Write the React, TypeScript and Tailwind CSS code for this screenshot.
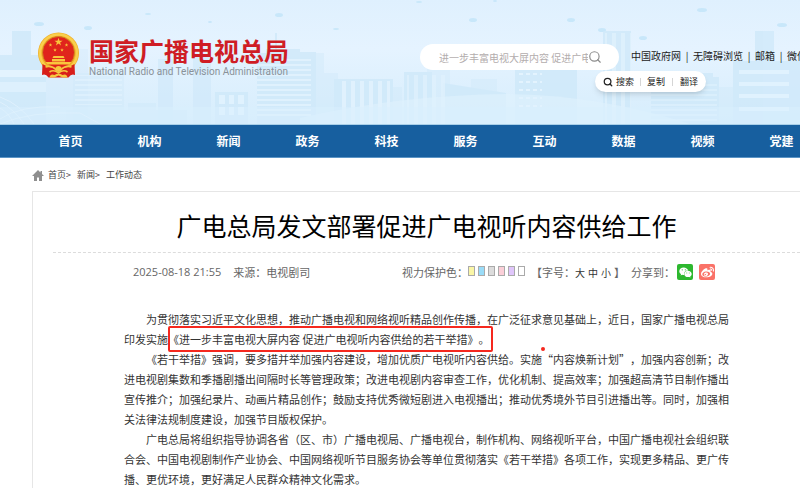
import { Search } from "lucide-react";
import { FaWeibo, FaWeixin } from "react-icons/fa";

const NAV = ["首页", "机构", "新闻", "政务", "科技", "服务", "互动", "数据", "视频", "党建"];

const TOP_LINKS = ["中国政府网", "无障碍浏览", "邮箱", "微信"];

const CRUMBS = ["首页", "新闻"];

const EYE_COLORS = [
  { name: "黄色", className: "bg-[#faf6a6]" },
  { name: "蓝色", className: "bg-[#9adcf8]" },
  { name: "灰色", className: "bg-[#dcdcdc]" },
  { name: "粉色", className: "bg-[#fbcfd8]" },
  { name: "紫色", className: "bg-[#e0c6fb]" },
  { name: "白色", className: "bg-white" },
];

export default function App() {
  return (
    <div
      lang="zh-CN"
      className="flex min-h-screen flex-col overflow-hidden bg-white font-['Noto_Sans_CJK_SC',sans-serif] text-[#333]"
    >
      <Header />
      <Nav />
      <Breadcrumb />
      <Article />
    </div>
  );
}

function Header() {
  return (
    <header className="relative h-[125px] overflow-hidden border-b border-[#a9cfe8] bg-[#e3f2fe]">
      <Skyline />

      <div className="relative flex h-full items-start pl-[37px] whitespace-nowrap">
        <a href="#home" className="mt-8 flex shrink-0 items-start gap-[9px]">
          <Emblem />
          <span className="flex flex-col">
            <span className="mt-1 text-[25px] leading-7 font-bold text-[#cf1d25]">国家广播电视总局</span>
            <span className="font-['Roboto',sans-serif] text-[10px] leading-4 text-[#8a9299]">
              National Radio and Television Administration
            </span>
          </span>
        </a>

        <form className="mt-11 ml-auto flex h-[26px] w-[199px] shrink-0 items-center rounded-full bg-white pr-[17px] pl-[19px]">
          <input
            type="text"
            aria-label="站内搜索"
            placeholder="进一步丰富电视大屏内容 促进广电视听"
            className="w-[150px] min-w-0 text-[10px] text-[#333] outline-none placeholder:text-[#b3adad]"
          />
          <button type="button" aria-label="搜索">
            <Search className="size-[14px] text-[#8c8c8c]" strokeWidth={2} />
          </button>
        </form>

        <div className="relative mt-12 ml-3 w-[169px] shrink-0">
          <nav className="flex text-[10px] leading-4 text-[#222]">
            {TOP_LINKS.map((label, i) => (
              <span key={label} className="flex">
                {i > 0 && <span className="w-3 text-center">|</span>}
                <a href="#top">{label}</a>
              </span>
            ))}
          </nav>

          {/* Menú flotante de selección */}
          <div className="absolute top-[23px] -left-9 flex h-[21px] items-center rounded-full bg-white px-2 text-[9px] text-[#222] shadow-md">
            <button type="button" className="flex items-center gap-[3px]">
              <Search className="size-[10px]" strokeWidth={3} />
              搜索
            </button>
            <span className="mx-[6px] h-2 w-px shrink-0 bg-[#d5d5d5]" />
            <button type="button">复制</button>
            <span className="mx-[7px] h-2 w-px shrink-0 bg-[#d5d5d5]" />
            <button type="button">翻译</button>
          </div>
        </div>
      </div>
    </header>
  );
}

function Nav() {
  return (
    <nav className="flex h-[33px] items-center border-b border-[#5c95c6] bg-[#175f9f] pl-[31px] text-[12px] font-bold text-white">
      {NAV.map((label) => (
        <a key={label} href="#nav" className="w-[79px] shrink-0 text-center">
          {label}
        </a>
      ))}
    </nav>
  );
}

function Breadcrumb() {
  return (
    <nav aria-label="面包屑" className="flex h-[33px] items-center pl-8 text-[9px] text-[#444]">
      <svg viewBox="0 0 12 12" className="mr-1 h-3 w-3 text-[#8f8f8f]" aria-hidden="true">
        <path d="M6 1 0 7h2v5h3V8.500h2V12h3V7h2L10 5V2H8.500v1.500z" fill="currentColor" />
      </svg>
      {CRUMBS.map((label) => (
        <span key={label} className="mr-[6px]">
          <a href="#crumb">{label}</a>&gt;
        </span>
      ))}
      <a href="#crumb">工作动态</a>
    </nav>
  );
}

function Article() {
  return (
    <main className="ml-8 flex-1 border-t border-l border-[#e6e6e6] pl-5">
      <h1 className="pt-[15px] pb-2 text-center text-[25px] leading-[37px] text-black">
        广电总局发文部署促进广电视听内容供给工作
      </h1>
      <div className="border-t border-dashed border-[#dcdcdc]" />

      <div className="mx-auto max-w-[605px]">
        <div className="mt-2 flex h-[22px] items-center pr-[14px] pl-[9px] text-[11px] whitespace-nowrap text-[#666]">
          <time className="font-['Open_Sans',sans-serif]">2025-08-18 21:55</time>
          <span className="ml-3">来源：电视剧司</span>

          <span className="ml-auto">视力保护色：</span>
          <span className="flex gap-[3px] pb-[2px]">
            {EYE_COLORS.map((c) => (
              <button
                key={c.name}
                type="button"
                aria-label={c.name}
                className={`h-[10px] w-[7px] border border-[#aaa] ${c.className}`}
              />
            ))}
          </span>
          <span className="ml-[6px]">【字号：</span>
          <span className="flex gap-[3px] text-[10px] text-[#333]">
            <button type="button">大</button>
            <button type="button">中</button>
            <button type="button">小</button>
          </span>
          <span className="ml-[3px]">】</span>
          <span className="ml-[6px]">分享到：</span>
          <button
            type="button"
            aria-label="微信"
            className="ml-[2px] flex size-4 items-center justify-center rounded-xs bg-[#2db82f] text-white"
          >
            <FaWeixin className="size-[13px]" />
          </button>
          <button
            type="button"
            aria-label="微博"
            className="ml-[6px] flex size-4 items-center justify-center rounded-xs bg-[#fa7268] text-white"
          >
            <FaWeibo className="size-[13px]" />
          </button>
        </div>

        <div className="relative mt-[26px] indent-[2em] text-[11px] leading-5 text-[#333] [text-spacing-trim:space-all]">
          <p>
            为贯彻落实习近平文化思想，推动广播电视和网络视听精品创作传播，在广泛征求意见基础上，近日，国家广播电视总局印发实施
            <span className="relative inline-block indent-0">
              《进一步丰富电视大屏内容 促进广电视听内容供给的若干举措》。
              <span className="absolute -inset-y-[3px] -right-1 left-0 rounded-xs border-2 border-[#f5281e]" />
            </span>
          </p>
          <p>
            《若干举措》强调，要多措并举加强内容建设，增加优质广电视听内容供给。实施“内容焕新计划”，加强内容创新；改进电视剧集数和季播剧播出间隔时长等管理政策；改进电视剧内容审查工作，优化机制、提高效率；加强超高清节目制作播出宣传推介；加强纪录片、动画片精品创作；鼓励支持优秀微短剧进入电视播出；推动优秀境外节目引进播出等。同时，加强相关法律法规制度建设，加强节目版权保护。
          </p>
          <p>
            广电总局将组织指导协调各省（区、市）广播电视局、广播电视台，制作机构、网络视听平台，中国广播电视社会组织联合会、中国电视剧制作产业协会、中国网络视听节目服务协会等单位贯彻落实《若干举措》各项工作，实现更多精品、更广传播、更优环境，更好满足人民群众精神文化需求。
          </p>
          <span className="absolute top-[38px] left-[417px] size-1 rounded-full bg-[#f5281e]" />
        </div>
      </div>
    </main>
  );
}

function Emblem() {
  const star = "M0-5 1.2-1.6 4.8-1.6 1.9.6 3 4 0 1.9-3 4-1.9.6-4.8-1.6-1.2-1.6z";
  return (
    <svg viewBox="0 0 42 46" className="h-[46px] w-[43px]" aria-hidden="true">
      <circle cx="21" cy="21" r="20.500" fill="#f1b02a" />
      <circle cx="21" cy="21" r="18.500" fill="none" stroke="#f9cf4c" strokeWidth="2.500" />
      <circle cx="21" cy="20.500" r="16" fill="#e0241c" stroke="#cf8a1e" strokeWidth=".8" />
      <g fill="#f9c63c">
        <path d={star} transform="translate(21 10) scale(.85)" />
        <path d={star} transform="translate(13 13) scale(.38)" />
        <path d={star} transform="translate(29 13) scale(.38)" />
        <path d={star} transform="translate(17.500 18) scale(.38)" />
        <path d={star} transform="translate(24.500 18) scale(.38)" />
        <path d="M16 24h10l1 2H15zM14.500 27h13v2.500h-13zM8 30h26L32 32.500H10z" />
      </g>
      <path d="M5 32Q11 36 21 36Q31 36 37 32L37.500 43Q34 41 31 45.500H11Q8 41 4.500 43z" fill="#d81e1a" />
      <path
        d="M8 35Q14 33 19 38M34 35Q28 33 23 38M12 40Q16 37 21 41Q26 37 30 40"
        fill="none"
        stroke="#f6c63f"
        strokeWidth="1.600"
      />
      <path d="M12 45.500Q13 41 17 43Q21 40 25 43Q29 41 30 45.500H25L21 43.500 17 45.500z" fill="#f6c63f" />
      <circle cx="21" cy="37" r="3" fill="#f6c63f" />
    </svg>
  );
}

function Skyline() {
  return (
    <svg
      viewBox="0 0 800 125"
      preserveAspectRatio="xMidYMax slice"
      className="absolute inset-0 size-full"
      aria-hidden="true"
    >
      <defs>
        <linearGradient id="sky" x1="0" y1="0" x2="0" y2="1">
          <stop offset="0" stopColor="#dff0fe" />
          <stop offset="0.4" stopColor="#e5f3ff" />
          <stop offset="1" stopColor="#d6edfc" />
        </linearGradient>
        <pattern id="floors" width="8" height="5" patternUnits="userSpaceOnUse">
          <rect width="8" height="2" fill="#e3f3fe" />
        </pattern>
        <pattern id="columns" width="9" height="8" patternUnits="userSpaceOnUse">
          <rect width="4" height="8" fill="#e0f1fd" />
        </pattern>
        <pattern id="windows" width="7" height="8" patternUnits="userSpaceOnUse">
          <rect x="1" y="2" width="4" height="2" fill="#e3f3fe" />
        </pattern>
      </defs>
      <rect width="800" height="125" fill="url(#sky)" />

      <g fill="#c8e7fa">
        <ellipse cx="39" cy="25" rx="5" ry="2" />
        <ellipse cx="88" cy="29" rx="4" ry="2" />
        <ellipse cx="148" cy="15" rx="3" ry="1" />
        <ellipse cx="210" cy="23" rx="2" ry="1" />
        <ellipse cx="279" cy="16" rx="4" ry="2" />
        <ellipse cx="336" cy="30" rx="3" ry="1" />
        <ellipse cx="419" cy="3" rx="3" ry="1" />
        <ellipse cx="473" cy="21" rx="4" ry="2" />
        <ellipse cx="495" cy="2" rx="2" ry="1" />
        <ellipse cx="571" cy="21" rx="4" ry="2" />
        <ellipse cx="602" cy="31" rx="4" ry="2" />
        <ellipse cx="643" cy="39" rx="4" ry="2" />
        <ellipse cx="702" cy="11" rx="5" ry="2" />
        <ellipse cx="782" cy="26" rx="5" ry="2" />
      </g>

      <g fill="#cfe9fa" opacity="0.8">
        <path d="M12 32H31V56H46V125H0V56H12z" />
        <path d="M38 62H74V50H88V125H38z" opacity="0.4" />
        <path d="M73 74H124V125H73z" opacity="0.5" />
        <path d="M158 60H173V125H158zM193 58H211V125H193z" opacity="0.8" />
        <path d="M128 104H156V125H128zM66 111H187V125H66z" opacity="0.6" />
        <path d="M215 93H248V125H215z" />
        <path d="M257 54H266V50H275V34H277V50H300V53H316V125H257z" />
        <path d="M316 54H324V74H338V125H316z" opacity="0.5" />
        <path d="M334 80H393V125H334z" />
        <path d="M393 88H402V125H393z" opacity="0.5" />
        <path d="M404 73H432V125H404z" />
        <path d="M427 69H450V125H427z" opacity="0.5" />
        <path d="M443 84 506 94V125H443z" />
        <path d="M471 80H497V94H471z" opacity="0.5" />
        <path d="M515 68H577V125H515z" />
        <path d="M603 32H631V125H603z" />
        <path d="M651 82H660V74H713V78H719V125H651z" />
        <path d="M733 62H755V32H774V62H800V125H733z" />
        <path d="M719 88H733V125H719z" opacity="0.5" />
      </g>

      <rect y="71" width="52" height="7" fill="#e3f3fe" />
      <rect y="83" width="46" height="10" fill="#ddf0fd" />
      <rect x="75" y="76" width="47" height="30" fill="url(#floors)" opacity="0.6" />
      <rect x="257" y="58" width="54" height="60" fill="url(#floors)" opacity="0.8" />
      <rect x="338" y="82" width="52" height="43" fill="url(#columns)" />
      <rect x="407" y="76" width="40" height="49" fill="url(#columns)" opacity="0.7" />
      <rect x="516" y="69" width="26" height="40" fill="url(#windows)" />
      <rect x="605" y="34" width="26" height="91" fill="url(#columns)" opacity="0.8" />
      <rect x="651" y="84" width="66" height="41" fill="url(#floors)" opacity="0.5" />
      <path
        d="M739 71H789V75H739zM739 83H789V87H739zM739 95H789V99H739zM739 108H789V112H739z"
        fill="#e0f2fe"
      />
      <path d="M219 96h6v9h-6zM229 96h5v9h-5zM238 96h6v9h-6zM219 108h6v8h-6zM229 108h5v8h-5zM238 108h6v8h-6z" fill="#e0f2fe" />

      <path d="M300 119Q400 96 506 95Q600 96 690 125H300z" fill="#e0f2fe" opacity="0.6" />
      <path
        d="M0 98Q20 105 34 125M0 103Q14 110 24 125M0 109Q9 114 14 125M0 120Q20 106 60 108M0 125Q30 112 80 114L100 125"
        fill="none"
        stroke="#eef8ff"
        strokeWidth="1"
        opacity="0.5"
      />
      <rect y="108" width="800" height="17" fill="#d9effd" opacity="0.5" />
    </svg>
  );
}
